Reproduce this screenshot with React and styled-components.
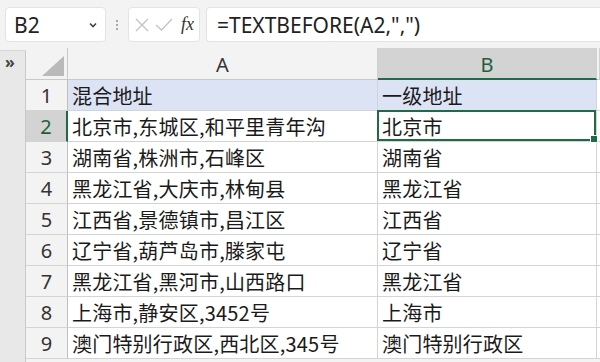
import { Fragment } from "react";
import styled, { createGlobalStyle } from "styled-components";

const GlobalStyle = createGlobalStyle`
    html, body {
        margin: 0;
        padding: 0;
        background: #f3f3f3;
    }
`

const Wrapper = styled.div`
    width: 600px;
    height: 362px;
    overflow: hidden;
    background-color: #f3f3f3;
    font-family: "Noto Sans", "Noto Sans CJK SC", sans-serif;
    color: #222;
`

const ToolBar = styled.div`
    height: 48px;
    box-sizing: border-box;
    padding: 7px 0 0 5px;
    display: flex;
    align-items: flex-start;
`
const NameBox = styled.div`
    width: 101px;
    height: 35px;
    box-sizing: border-box;
    background-color: white;
    border: 1px solid #e3e3e3;
    border-radius: 4px;
    display: flex;
    align-items: center;
    justify-content: space-between;
    padding: 0 6px 0 8px;
    font-size: 21px;
    color: #222;
`
const Dots = styled.div`
    width: 22px;
    height: 35px;
    display: flex;
    flex-direction: column;
    align-items: center;
    justify-content: center;
    gap: 2px;
    span {
        width: 2px;
        height: 2px;
        background: #a8a8a8;
    }
`
const FxBox = styled.div`
    width: 72px;
    height: 35px;
    box-sizing: border-box;
    background-color: white;
    border: 1px solid #e3e3e3;
    border-radius: 4px;
    display: flex;
    align-items: center;
    padding: 0 5px 0 4px;
    gap: 3px;
`
const Fx = styled.span`
    font-family: "Liberation Serif", serif;
    font-style: italic;
    font-size: 18px;
    color: #333;
    margin-left: 4px;
`
const FormulaBox = styled.div`
    flex: 1;
    height: 35px;
    margin-left: 6px;
    box-sizing: border-box;
    background-color: white;
    border: 1px solid #e3e3e3;
    border-right: none;
    border-radius: 4px 0 0 4px;
    display: flex;
    align-items: center;
    padding-left: 10px;
    font-size: 21px;
    color: #222;
`

const Sheet = styled.div`
    display: flex;
`
const Gutter = styled.div`
    width: 26px;
    height: 320px;
    margin-top: 2px;
    box-sizing: border-box;
    background-color: #e8e8e8;
    border-right: 1px solid #c9c9c9;
    border-top: 1px solid #d6d6d6;
    font-size: 16px;
    font-weight: bold;
    line-height: 16px;
    color: #444;
    padding: 3px 0 0 5px;
`
const Grid = styled.div`
    display: grid;
    grid-template-columns: 42px 310px 219px 3px;
    grid-template-rows: 32px repeat(9, 31px);
`
const Cell = styled.div`
    box-sizing: border-box;
    border-right: 1px solid #d4d4d4;
    border-bottom: 1px solid #d4d4d4;
    background-color: ${(p) => (p.head ? "#dce3f4" : "white")};
    display: flex;
    align-items: center;
    padding-left: 4px;
    font-family: "Noto Sans CJK SC", "Noto Sans", sans-serif;
    font-size: 20px;
    letter-spacing: 0.2px;
    color: #1a1a1a;
    white-space: nowrap;
    position: relative;
`
const ColHead = styled.div`
    box-sizing: border-box;
    background-color: ${(p) => (p.active ? "#d3d3d3" : "#f3f3f3")};
    border-right: 1px solid #d0d0d0;
    border-bottom: ${(p) => (p.active ? "2px solid #1f6b45" : "1px solid #c8c8c8")};
    display: flex;
    align-items: center;
    justify-content: center;
    font-size: 20px;
    color: ${(p) => (p.active ? "#1f5e3e" : "#333")};
    padding-top: 2px;
`
const Corner = styled.div`
    box-sizing: border-box;
    background-color: #f3f3f3;
    border-right: 1px solid #c8c8c8;
    border-bottom: 1px solid #c8c8c8;
    display: flex;
    align-items: flex-end;
    justify-content: flex-end;
    padding: 0 3px 3px 0;
`
const RowHead = styled.div`
    box-sizing: border-box;
    background-color: ${(p) => (p.active ? "#d3d3d3" : "#f3f3f3")};
    border-right: ${(p) => (p.active ? "2px solid #1f6b45" : "1px solid #c0c0c0")};
    border-bottom: 1px solid #d4d4d4;
    display: flex;
    align-items: center;
    justify-content: center;
    font-size: 20px;
    color: ${(p) => (p.active ? "#1f5e3e" : "#333")};
`
const Edge = styled.div`
    background-color: white;
    border-bottom: 1px solid #d4d4d4;
`
const Selection = styled.div`
    position: absolute;
    inset: -1px 0 0 -1px;
    border: 2px solid #1f6b45;
`
const Handle = styled.div`
    position: absolute;
    right: -4px;
    bottom: -4px;
    width: 6px;
    height: 6px;
    background: #1f6b45;
    border: 1px solid white;
    z-index: 2;
`

const rows = [
    ["混合地址", "一级地址"],
    ["北京市,东城区,和平里青年沟", "北京市"],
    ["湖南省,株洲市,石峰区", "湖南省"],
    ["黑龙江省,大庆市,林甸县", "黑龙江省"],
    ["江西省,景德镇市,昌江区", "江西省"],
    ["辽宁省,葫芦岛市,滕家屯", "辽宁省"],
    ["黑龙江省,黑河市,山西路口", "黑龙江省"],
    ["上海市,静安区,3452号", "上海市"],
    ["澳门特别行政区,西北区,345号", "澳门特别行政区"],
];

const App = () => {
    return (
        <>
            <GlobalStyle />
            <Wrapper>
                <ToolBar>
                    <NameBox>
                        B2
                        <svg width="12" height="12" viewBox="0 0 12 12">
                            <path d="M3 4.5 L6 7.5 L9 4.5" fill="none" stroke="#444" strokeWidth="1.6" />
                        </svg>
                    </NameBox>
                    <Dots><span /><span /><span /></Dots>
                    <FxBox>
                        <svg width="18" height="18" viewBox="0 0 18 18">
                            <path d="M3 3 L15 15 M15 3 L3 15" stroke="#c4c4c4" strokeWidth="1.4" />
                        </svg>
                        <svg width="20" height="18" viewBox="0 0 20 18">
                            <path d="M2 9 L7.5 14 L18 3" fill="none" stroke="#c4c4c4" strokeWidth="1.4" />
                        </svg>
                        <Fx>fx</Fx>
                    </FxBox>
                    <FormulaBox>=TEXTBEFORE(A2,",")</FormulaBox>
                </ToolBar>
                <Sheet>
                    <Gutter>»</Gutter>
                    <Grid>
                        <Corner>
                            <svg width="22" height="20" viewBox="0 0 22 20">
                                <path d="M22 0 L22 20 L0 20 Z" fill="#b9b9b9" />
                            </svg>
                        </Corner>
                        <ColHead>A</ColHead>
                        <ColHead active>B</ColHead>
                        <ColHead />
                        {rows.map((r, i) => (
                            <Fragment key={i}>
                                <RowHead active={i === 1}>{i + 1}</RowHead>
                                <Cell head={i === 0}>{r[0]}</Cell>
                                <Cell head={i === 0}>
                                    {r[1]}
                                    {i === 1 && <Selection><Handle /></Selection>}
                                </Cell>
                                <Edge />
                            </Fragment>
                        ))}
                    </Grid>
                </Sheet>
            </Wrapper>
        </>
    )
}

export default App;
